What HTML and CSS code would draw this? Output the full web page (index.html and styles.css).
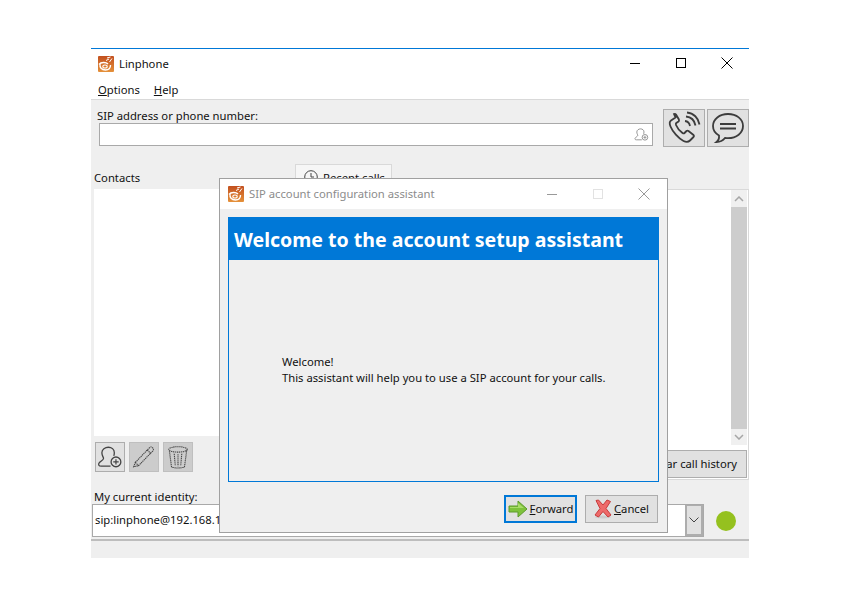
FILE: index.html
```html
<!DOCTYPE html>
<html lang="en">
<head>
<meta charset="utf-8">
<title>Linphone</title>
<link rel="stylesheet" href="styles.css">
</head>
<body>
<svg class="defs" width="0" height="0" aria-hidden="true">
  <defs>
    <linearGradient id="logo-fill" x1="0" y1="0" x2="0" y2="1">
      <stop offset="0" stop-color="#c24f1e"/>
      <stop offset="1" stop-color="#e5913a"/>
    </linearGradient>
  </defs>
  <symbol id="logo" viewBox="0 0 16 16">
    <rect width="16" height="16" rx="1" fill="url(#logo-fill)"/>
    <path d="M1 8.500c2-2.500 7-2.500 9-.5M2 8c-.5 3.500 1.500 6 5.500 6s5-2 5-5" fill="none" stroke="#fff" stroke-width="1.400"/>
    <ellipse cx="7" cy="10.500" rx="2.200" ry="1.500" fill="none" stroke="#fff" stroke-width="1.100"/>
    <path d="M8 4.500l3-1.500M9 2l3.500-1M11.500 6l2.500-3.500" fill="none" stroke="#fff" stroke-width="1"/>
  </symbol>
  <symbol id="person" viewBox="0 0 24 24">
    <path d="M12.500 20.500H4c-2.500 0-3-1.500-2-3 1.200-1.700 3.500-2.300 4-4 .3-1-1.500-2.500-1.500-5.500C4.500 5 7.500 3 10.500 3s5.500 2 5.500 5c0 1-.2 2-.5 3" fill="none" stroke="currentColor" stroke-width="1.200"/>
    <circle cx="17.500" cy="16.500" r="4.500" fill="none" stroke="currentColor" stroke-width="1.200"/>
    <path d="M15 16.500h5M17.500 14v5" stroke="currentColor" stroke-width="1.100"/>
  </symbol>
</svg>

<div class="window">
  <div class="titlebar">
    <svg class="logo"><use href="#logo"/></svg>
    <span class="title">Linphone</span>
    <div class="controls">
      <span class="ctl"><svg width="12" height="12" viewBox="0 0 12 12"><path d="M1 6.500h10" stroke="#000"/></svg></span>
      <span class="ctl"><svg width="12" height="12" viewBox="0 0 12 12"><rect x="1.500" y="1.500" width="9" height="9" fill="none" stroke="#000"/></svg></span>
      <span class="ctl"><svg width="12" height="12" viewBox="0 0 12 12"><path d="M.5.500l11 11M11.500.500l-11 11" stroke="#000"/></svg></span>
    </div>
  </div>
  <div class="menubar"><span><u>O</u>ptions</span><span><u>H</u>elp</span></div>

  <div class="content">
    <div class="top">
      <div class="address">
        <label class="lbl">SIP address or phone number:</label>
        <div class="input">
          <svg class="input-icon"><use href="#person"/></svg>
        </div>
      </div>
      <button class="big-btn" aria-label="Call">
        <svg width="36" height="36" viewBox="0 0 36 36" fill="none" stroke="#3c3c3c">
          <path d="M9.500 7.500L5 10.500c-1.500 1-1.500 3.500-.5 6 2 5 8 12 13 14.500 2.500 1.200 5 1 6.500-.5l3.500-3.500c.7-.7.5-1.500 0-2l-5-4c-.7-.5-1.500-.5-2 0l-2 2c-.5.500-1.200.5-2 0-2-1.500-5.500-5.500-6.500-8-.3-.8-.2-1.500.3-2l2.200-1.500c.6-.5.7-1.200.4-2l-2.900-5c-.5-.7-1.300-.8-2-.5z" stroke-width="1.800"/>
          <path d="M19 11c2.500.3 4.500 2.300 5 5M20 6.500c5 .5 8.500 4 9.500 9M21 2.500c6.500.5 11.500 5.500 12.500 12" stroke-width="1.800"/>
        </svg>
      </button>
      <button class="big-btn" aria-label="Chat">
        <svg width="36" height="36" viewBox="0 0 36 36" fill="none" stroke="#3c3c3c">
          <path d="M18 4C9.500 4 3 9.300 3 16c0 4 2.500 7.500 6 9.500.3 2.500-.5 5-2.500 6.500 3.500 0 6.500-1.500 8.500-4 1 .1 2 .2 3 .2 8.500 0 15-5.200 15-12.200S26.500 4 18 4z" stroke-width="1.800"/>
          <path d="M10 14h16M10 18.500h16" stroke-width="2"/>
        </svg>
      </button>
    </div>

    <div class="tabs-row">
      <div class="contacts-head">Contacts</div>
      <div class="tab">
        <svg width="14" height="14" viewBox="0 0 14 14" fill="none" stroke="#444"><circle cx="7" cy="7" r="6.300"/><path d="M7 3v4h3"/></svg>
        Recent calls
      </div>
    </div>

    <div class="panes">
      <div class="left-pane">
        <div class="list"></div>
        <div class="tools">
          <button class="tool" aria-label="Add contact"><svg width="26" height="26"><use href="#person"/></svg></button>
          <button class="tool off" aria-label="Edit contact">
            <svg width="26" height="26" viewBox="0 0 24 24" fill="none" stroke="#444" stroke-dasharray="1.200 .6"><path d="M4 17L17 3.500c1-1 2-1 3 0s1 2 0 3L7 20l-4.500 1zM15 5.500l3.500 3.500M4 17l3 3"/></svg>
          </button>
          <button class="tool off" aria-label="Delete contact">
            <svg width="26" height="26" viewBox="0 0 24 24" fill="none" stroke="#444" stroke-dasharray="1.200 .6"><ellipse cx="12" cy="5" rx="8.500" ry="2.500"/><path d="M4 6l2 15c2 1.500 10 1.500 12 0l2-15M8.500 9l1 11M12 9.500V20.500M15.500 9l-1 11"/></svg>
          </button>
        </div>
      </div>
      <div class="right-pane">
        <div class="history">
          <div class="scrollbar">
            <svg class="arrow-up" width="10" height="6" viewBox="0 0 10 6" fill="none" stroke="#a6a6a6" stroke-width="1.500"><path d="M1 5l4-4 4 4"/></svg>
            <span class="thumb"></span>
            <svg class="arrow-down" width="10" height="6" viewBox="0 0 10 6" fill="none" stroke="#a6a6a6" stroke-width="1.500"><path d="M1 1l4 4 4-4"/></svg>
          </div>
        </div>
        <button class="clear">Clear call history</button>
      </div>
    </div>

    <div class="identity-label">My current identity:</div>
    <div class="identity-row">
      <div class="combo">
        <span class="combo-text">sip:linphone@192.168.1.10</span>
        <span class="combo-btn"><svg width="10" height="6" viewBox="0 0 10 6" fill="none" stroke="#444"><path d="M.5.500L5 5l4.500-4.500"/></svg></span>
      </div>
      <span class="status-dot"></span>
    </div>
    <div class="statusbar"></div>
  </div>
</div>

<div class="dialog">
  <div class="dlg-title">
    <svg class="logo"><use href="#logo"/></svg>
    <span class="dlg-name">SIP account configuration assistant</span>
    <div class="controls dlg-controls">
      <span class="ctl"><svg width="12" height="12" viewBox="0 0 12 12"><path d="M1 6.500h10" stroke="#999"/></svg></span>
      <span class="ctl"><svg width="12" height="12" viewBox="0 0 12 12"><rect x="1.500" y="1.500" width="9" height="9" fill="none" stroke="#e2e2e2"/></svg></span>
      <span class="ctl"><svg width="12" height="12" viewBox="0 0 12 12"><path d="M.5.500l11 11M11.500.500l-11 11" stroke="#999"/></svg></span>
    </div>
  </div>
  <div class="dlg-body">
    <div class="page">
      <h1 class="banner">Welcome to the account setup assistant</h1>
      <div class="page-main">
        <p class="welcome">Welcome!<br>This assistant will help you to use a SIP account for your calls.</p>
      </div>
    </div>
    <div class="dlg-actions">
      <button class="action focus">
        <svg width="20" height="18" viewBox="0 0 20 18"><path d="M1 6h9V1l9 8-9 8v-5H1z" fill="#7ec23c" stroke="#5c9a2a"/><path d="M2 7h8V3l6 5H2z" fill="#a8dc68"/></svg>
        <span><u>F</u>orward</span>
      </button>
      <button class="action">
        <svg width="18" height="20" viewBox="0 0 18 20"><ellipse cx="9" cy="18" rx="8" ry="1.500" fill="#ccc"/><path d="M2 1.500l2.500-.5L9 6l4-5 3.500 1.500L12 9.500l5 6.500-3 2-5-5.500L4.500 18 1 16l5-6.500z" fill="#ee6a6a" stroke="#c83c3c"/></svg>
        <span><u>C</u>ancel</span>
      </button>
    </div>
  </div>
</div>
</body>
</html>
```

FILE: styles.css
```css
* { box-sizing: border-box; }
html, body { margin: 0; padding: 0; background: #fff; }
body { width: 859px; height: 601px; position: relative; overflow: hidden; font-family: "Noto Sans", sans-serif; font-size: 11.25px; color: #111; }
.defs { position: absolute; }
button { font: inherit; color: inherit; padding: 0; margin: 0; }

.window { position: absolute; left: 91px; top: 48px; width: 658px; height: 510px; border-top: 1px solid #0078d7; display: flex; flex-direction: column; background: #fff; }
.titlebar { height: 30px; display: flex; align-items: center; padding-left: 7px; flex: none; }
.logo { width: 16px; height: 16px; flex: none; margin-bottom: 1px; }
.title { margin: 0 0 2px 5px; }
.controls { margin-left: auto; display: flex; padding-bottom: 2px; margin-right: -1px; }
.ctl { width: 46px; height: 30px; display: flex; align-items: center; justify-content: center; }

.menubar { height: 21px; display: flex; gap: 14px; padding: 1px 0 0 7px; align-items: center; flex: none; border-bottom: 1px solid #d9d9d9; }

.content { flex: 1; background: #efefef; display: flex; flex-direction: column; min-height: 0; }
.top { display: flex; padding: 9px 0 0 6px; height: 64px; flex: none; }
.address { width: 566px; flex: none; }
.lbl { display: block; line-height: 14px; }
.input { margin: 0 10px 0 2px; height: 23px; border: 1px solid #a9a9a9; background: #fff; display: flex; align-items: center; justify-content: flex-end; padding-right: 3px; }
.input-icon { width: 15px; height: 15px; color: #777; }
.big-btn { flex: none; width: 42px; height: 38px; border: 1px solid #adadad; background: #e1e1e1; display: flex; align-items: center; justify-content: center; }
.big-btn + .big-btn { margin-left: 2px; }

.tabs-row { height: 25px; display: flex; flex: none; padding-left: 3px; }
.contacts-head { width: 201px; padding-top: 6px; line-height: 16px; }
.tab { width: 97px; height: 25px; background: #f6f6f6; border: 1px solid #d9d9d9; border-bottom: 0; display: flex; align-items: center; gap: 5px; padding-left: 8px; white-space: nowrap; }

.panes { display: flex; height: 300px; flex: none; padding-left: 3px; }
.left-pane { width: 202px; display: flex; flex-direction: column; }
.list { height: 247px; background: #fff; }
.tools { display: flex; gap: 4px; padding: 6px 0 0 1px; }
.tool { width: 30px; height: 30px; border: 1px solid #adadad; background: #e1e1e1; display: flex; align-items: center; justify-content: center; color: #444; }
.tool.off { background: #cccccc; border-color: #bfbfbf; }
.right-pane { flex: none; width: 453px; height: 291px; background: #fff; border: 1px solid #d9d9d9; display: flex; flex-direction: column; }
.history { height: 255px; display: flex; justify-content: flex-end; padding-right: 1px; }
.scrollbar { width: 16px; background: #f0f0f0; display: flex; flex-direction: column; align-items: center; }
.arrow-up { margin: 6px 0 5px; flex: none; }
.thumb { width: 16px; flex: 1; background: #cdcdcd; }
.arrow-down { margin: 5px 0 5px; flex: none; }
.clear { align-self: flex-end; width: 107px; height: 28px; padding-bottom: 2px; border: 1px solid #adadad; background: #e1e1e1; margin: 5px 1px 0 0; white-space: nowrap; }

.identity-label { flex: none; line-height: 16px; margin: 0 0 0 3px; }
.identity-row { display: flex; flex: none; align-items: center; margin-top: -1px; }
.combo { margin-left: 1px; width: 612px; height: 33px; border: 1px solid #a9a9a9; background: #fff; display: flex; justify-content: space-between; }
.combo-text { padding: 7px 0 0 2px; line-height: 16px; }
.combo-btn { width: 18px; border: 2px solid #adadad; border-width: 1px 2px 2px 2px; background: #e1e1e1; display: flex; align-items: center; justify-content: center; }
.status-dot { width: 20px; height: 20px; border-radius: 50%; background: #95c11f; margin-left: 12px; }
.statusbar { flex: 1; margin-top: 2px; border-top: 2px solid #bdbdbd; }

.dialog { position: absolute; left: 219px; top: 178px; width: 449px; height: 355px; border: 1px solid #a0a0a0; background: #efefef; display: flex; flex-direction: column; }
.dlg-title { height: 30px; background: #fff; display: flex; align-items: center; padding-left: 8px; flex: none; }
.dlg-name { margin: 0 0 2px 5px; color: #8c8c8c; }
.dlg-controls { padding-bottom: 0; margin-right: 0; }
.dlg-body { flex: 1; padding: 8px 8px 0; display: flex; flex-direction: column; }
.page { height: 265px; border: 1px solid #0078d7; display: flex; flex-direction: column; }
.banner { margin: 0; height: 42px; flex: none; background: #0078d7; color: #fff; font-size: 19.55px; font-weight: 700; line-height: 43px; padding-left: 5px; white-space: nowrap; }
.page-main { flex: 1; padding: 94px 0 0 53px; }
.welcome { margin: 0; line-height: 16px; }
.dlg-actions { display: flex; justify-content: flex-end; gap: 8px; margin-top: 13px; padding-right: 1px; }
.action { width: 73px; height: 28px; border: 1px solid #adadad; background: #e1e1e1; display: flex; align-items: center; justify-content: center; gap: 2px; }
.action span { margin-bottom: 2px; }
.action.focus { border: 2px solid #0078d7; }
```
